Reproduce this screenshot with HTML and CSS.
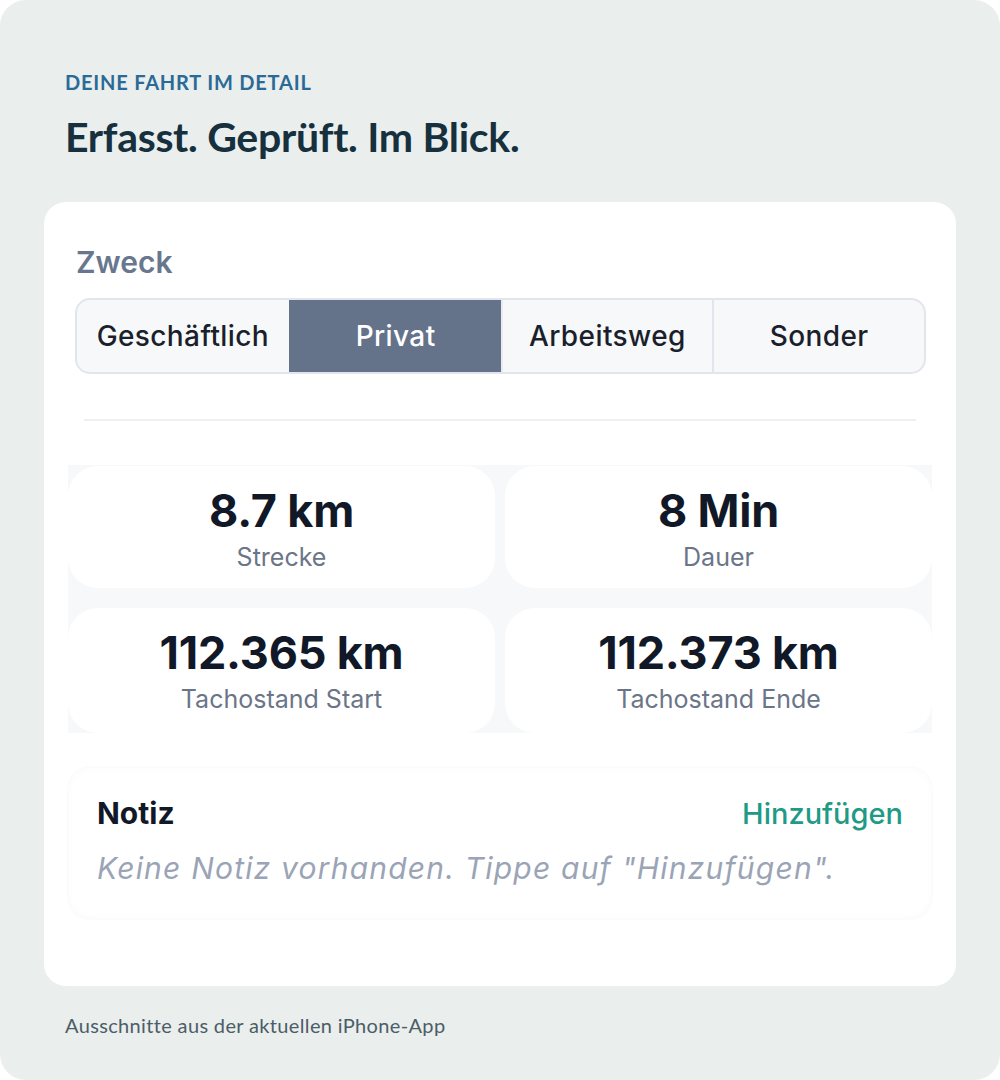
FILE: index.html
```html
<!DOCTYPE html>
<html>
    <head>
        <meta charset="utf-8">
        <meta name="viewport" content="width=device-width,initial-scale=1.0">
        <title>Deine Fahrt im Detail</title>
        <link rel="stylesheet" href="styles.css">
    </head>
    <body>
        <div class="panel">
            <div class="intro">
                <div class="eyebrow">DEINE FAHRT IM DETAIL</div>
                <h1 class="headline">Erfasst. Geprüft. Im Blick.</h1>
            </div>

            <div class="appCard">
                <div class="fieldLabel">Zweck</div>
                <div class="segmented">
                    <div class="segment">Geschäftlich</div>
                    <div class="segment active">Privat</div>
                    <div class="segment">Arbeitsweg</div>
                    <div class="segment">Sonder</div>
                </div>

                <div class="rule"></div>

                <div class="stats">
                    <div class="stat">
                        <div class="statValue">8.7 km</div>
                        <div class="statLabel">Strecke</div>
                    </div>
                    <div class="stat">
                        <div class="statValue">8 Min</div>
                        <div class="statLabel">Dauer</div>
                    </div>
                    <div class="stat">
                        <div class="statValue">112.365 km</div>
                        <div class="statLabel">Tachostand Start</div>
                    </div>
                    <div class="stat">
                        <div class="statValue">112.373 km</div>
                        <div class="statLabel">Tachostand Ende</div>
                    </div>
                </div>

                <div class="note">
                    <div class="noteHead">
                        <span class="noteTitle">Notiz</span>
                        <span class="noteAction">Hinzufügen</span>
                    </div>
                    <div class="notePlaceholder">Keine Notiz vorhanden. Tippe auf "Hinzufügen".</div>
                </div>
            </div>

            <div class="caption">Ausschnitte aus der aktuellen iPhone-App</div>
        </div>
    </body>
</html>
```

FILE: styles.css
```css
html, body {
    margin: 0;
    padding: 0;
    background-color: #ffffff;
}

.panel {
    box-sizing: border-box;
    width: 1000px;
    height: 1080px;
    padding: 70px 44px 0;
    border-radius: 26px;
    background-color: #eaeeed;
    font-family: "Lato", sans-serif;
}

.intro {
    padding: 0 21px;
}

.eyebrow {
    font-size: 20px;
    font-weight: 700;
    line-height: 24px;
    letter-spacing: 0.8px;
    color: #2a6a97;
}

.headline {
    margin: 18px 0 0;
    font-size: 41px;
    font-weight: 700;
    line-height: 50px;
    color: #16303e;
    letter-spacing: -0.3px;
}

/* app screenshot part */

.appCard {
    margin-top: 40px;
    height: 784px;
    box-sizing: border-box;
    padding-top: 43px;
    border-radius: 22px;
    background-color: #ffffff;
    font-family: "Inter", "Roboto", sans-serif;
}

.fieldLabel {
    margin: 0 32px;
    font-size: 30px;
    font-weight: 600;
    line-height: 35px;
    color: #68778e;
}

.segmented {
    display: grid;
    grid-template-columns: repeat(4, 1fr);
    margin: 18px 30px 0 31px;
    height: 76px;
    box-sizing: border-box;
    border: 2px solid #e2e6ec;
    border-radius: 15px;
    background-color: #f7f8fa;
    overflow: hidden;
}

.segment {
    display: flex;
    align-items: center;
    justify-content: center;
    font-size: 28px;
    font-weight: 500;
    letter-spacing: 0.4px;
    color: #1a1f2b;
}

.segment + .segment {
    border-left: 2px solid #e2e6ec;
}

.segment.active {
    background-color: #64738a;
    border-left-color: #64738a;
    color: #ffffff;
}

.segment.active + .segment {
    border-left-color: #e8ebf0;
}

.rule {
    margin: 45px 40px 0;
    height: 2px;
    background-color: #edf0f0;
}

.stats {
    display: grid;
    grid-template-columns: 1fr 1fr;
    grid-template-rows: 122px 125px;
    gap: 20px 10px;
    margin: 44px 24px 0;
    padding-top: 1px;
    background-color: #f7f8fa;
}

.stat {
    box-sizing: border-box;
    padding-top: 22px;
    border-radius: 30px;
    background-color: #ffffff;
    text-align: center;
}

.statValue {
    font-size: 45px;
    font-weight: 700;
    line-height: 45px;
    color: #111827;
    letter-spacing: -0.2px;
}

.statLabel {
    margin-top: 9px;
    font-size: 25px;
    line-height: 30px;
    color: #6b7588;
}

.note {
    box-sizing: border-box;
    margin: 34px 24px 0;
    height: 152px;
    padding: 28px 29px 0;
    border-radius: 22px;
    background-color: #ffffff;
    box-shadow: 0 0 0 1px #fafbfc, inset 0 0 8px #f8f9fa;
}

.noteHead {
    display: flex;
    justify-content: space-between;
    align-items: baseline;
}

.noteTitle {
    font-size: 30px;
    font-weight: 700;
    line-height: 36px;
    color: #111827;
}

.noteAction {
    font-size: 29px;
    font-weight: 500;
    line-height: 36px;
    color: #1f9a86;
}

.notePlaceholder {
    margin-top: 18px;
    font-size: 30px;
    font-style: italic;
    line-height: 36px;
    letter-spacing: 1.2px;
    color: #9aa4b6;
}

.caption {
    margin-top: 27px;
    padding: 0 21px;
    font-size: 20px;
    font-weight: 400;
    line-height: 24px;
    letter-spacing: 0.35px;
    color: #4b5d67;
}
```
